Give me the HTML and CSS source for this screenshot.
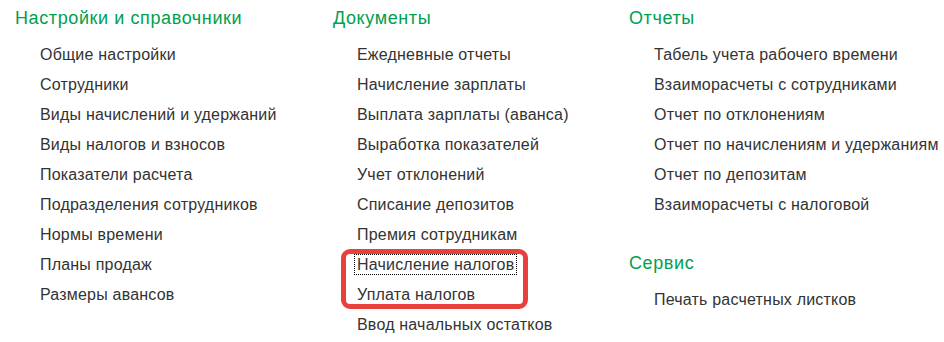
FILE: index.html
```html
<!DOCTYPE html>
<html lang="ru">
<head>
    <meta charset="UTF-8">
    <meta name="viewport" content="width=device-width, initial-scale=1.0">
    <title>Зарплата</title>
    <link rel="stylesheet" href="styles.css">
</head>
<body>
    <div class="panel">
        <div class="column col-settings">
            <div class="section">
                <h2 class="section-title">Настройки и справочники</h2>
                <ul class="links">
                    <li><a href="#">Общие настройки</a></li>
                    <li><a href="#">Сотрудники</a></li>
                    <li><a href="#">Виды начислений и удержаний</a></li>
                    <li><a href="#">Виды налогов и взносов</a></li>
                    <li><a href="#">Показатели расчета</a></li>
                    <li><a href="#">Подразделения сотрудников</a></li>
                    <li><a href="#">Нормы времени</a></li>
                    <li><a href="#">Планы продаж</a></li>
                    <li><a href="#">Размеры авансов</a></li>
                </ul>
            </div>
        </div>

        <div class="column col-docs">
            <div class="section">
                <h2 class="section-title">Документы</h2>
                <ul class="links">
                    <li><a href="#">Ежедневные отчеты</a></li>
                    <li><a href="#">Начисление зарплаты</a></li>
                    <li><a href="#">Выплата зарплаты (аванса)</a></li>
                    <li><a href="#">Выработка показателей</a></li>
                    <li><a href="#">Учет отклонений</a></li>
                    <li><a href="#">Списание депозитов</a></li>
                    <li><a href="#">Премия сотрудникам</a></li>
                    <li class="marked">
                        <ul class="links">
                            <li><a href="#" class="focused">Начисление налогов</a></li>
                            <li><a href="#">Уплата налогов</a></li>
                        </ul>
                    </li>
                    <li><a href="#">Ввод начальных остатков</a></li>
                </ul>
            </div>
        </div>

        <div class="column col-reports">
            <div class="section">
                <h2 class="section-title">Отчеты</h2>
                <ul class="links">
                    <li><a href="#">Табель учета рабочего времени</a></li>
                    <li><a href="#">Взаиморасчеты с сотрудниками</a></li>
                    <li><a href="#">Отчет по отклонениям</a></li>
                    <li><a href="#">Отчет по начислениям и удержаниям</a></li>
                    <li><a href="#">Отчет по депозитам</a></li>
                    <li><a href="#">Взаиморасчеты с налоговой</a></li>
                </ul>
            </div>
            <div class="section">
                <h2 class="section-title">Сервис</h2>
                <ul class="links">
                    <li><a href="#">Печать расчетных листков</a></li>
                </ul>
            </div>
        </div>
    </div>
</body>
</html>
```

FILE: styles.css
```css
:root {
    --title-color: #00a04e;
    --link-color: #333333;
    --mark-color: #e8403a;
}

*,
*::before,
*::after {
    margin: 0;
    padding: 0;
    box-sizing: border-box;
}

body {
    background: #fff;
    font-family: 'Liberation Sans', Arial, sans-serif;
    overflow: hidden;
    height: 342px;
}

.panel {
    display: grid;
    grid-template-columns: 318px 296px 1fr;
    padding: 3px 0 0 15px;
    height: 342px;
    overflow: hidden;
}

.section + .section {
    margin-top: 28px;
}

.section-title {
    font-size: 18px;
    font-weight: normal;
    line-height: 30px;
    letter-spacing: 0.6px;
    color: var(--title-color);
    margin-bottom: 7px;
    white-space: nowrap;
}

.links {
    list-style: none;
    padding-left: 25px;
}

.links .links {
    padding-left: 0;
}

.links li {
    font-size: 16px;
    line-height: 30px;
    letter-spacing: 0.2px;
    white-space: nowrap;
}

.links a {
    color: var(--link-color);
    text-decoration: none;
}

.col-docs .links {
    padding-left: 24px;
}

.col-docs .links .links {
    padding-left: 0;
}

.marked {
    position: relative;
}

.marked::after {
    content: "";
    position: absolute;
    top: -1px;
    bottom: 1px;
    left: -16px;
    width: 187px;
    border: 5px solid var(--mark-color);
    border-radius: 9px;
    pointer-events: none;
}

.focused {
    outline: 1px dotted #000;
    padding: 1px 2px;
    margin-left: -2px;
}
```
